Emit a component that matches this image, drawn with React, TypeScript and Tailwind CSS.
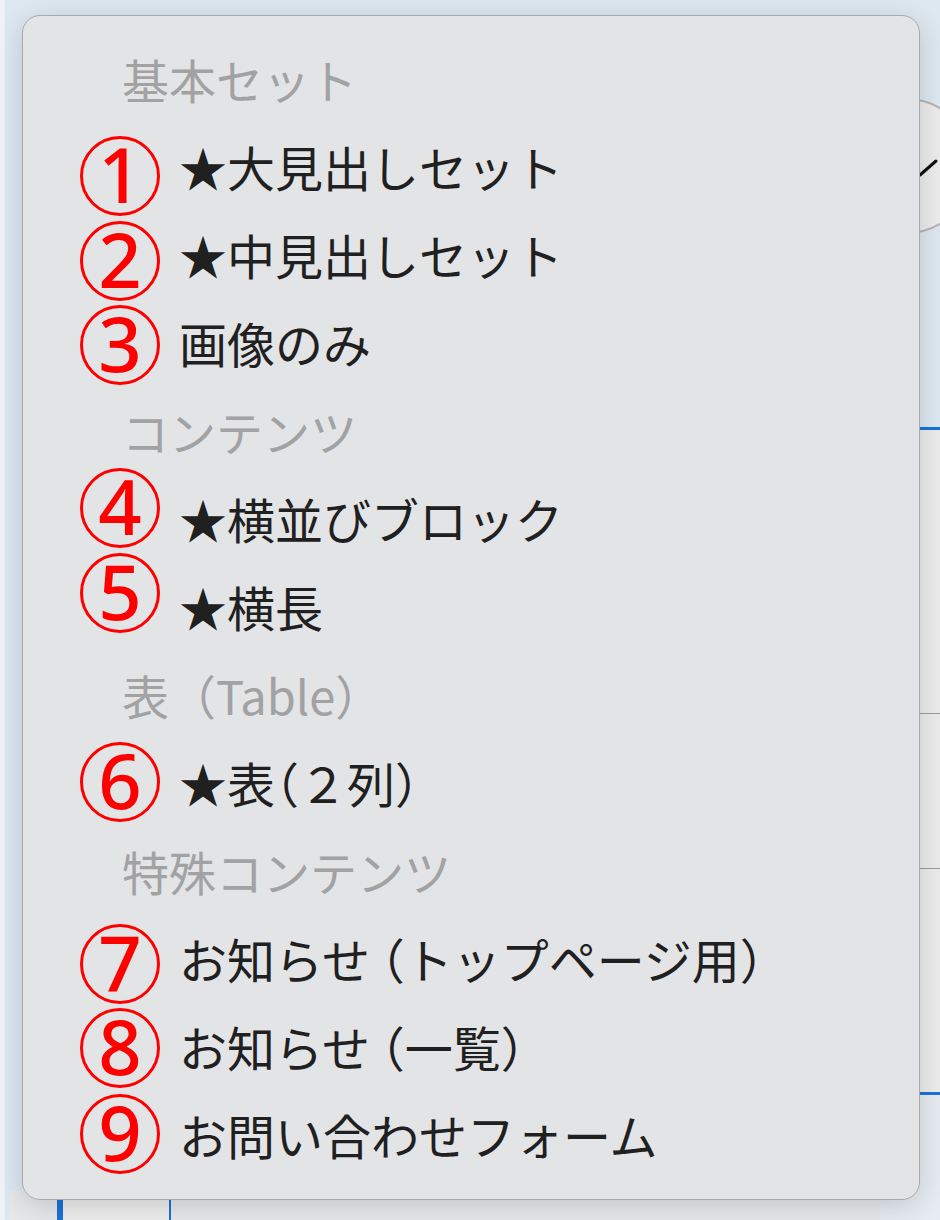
import React from "react";

type Row =
  | { kind: "h"; text: string }
  | { kind: "i"; n: number; text: string; dy: number };

const rows: Row[] = [
  { kind: "h", text: "基本セット" },
  { kind: "i", n: 1, text: "★大見出しセット", dy: 10 },
  { kind: "i", n: 2, text: "★中見出しセット", dy: 7 },
  { kind: "i", n: 3, text: "画像のみ", dy: 3 },
  { kind: "h", text: "コンテンツ" },
  { kind: "i", n: 4, text: "★横並びブロック", dy: -10 },
  { kind: "i", n: 5, text: "★横長", dy: -13 },
  { kind: "h", text: "表（Table）" },
  { kind: "i", n: 6, text: "★表（２列）", dy: 0 },
  { kind: "h", text: "特殊コンテンツ" },
  { kind: "i", n: 7, text: "お知らせ （トップページ用）", dy: 6 },
  { kind: "i", n: 8, text: "お知らせ （一覧）", dy: 2 },
  { kind: "i", n: 9, text: "お問い合わせフォーム", dy: 0 },
];

const font = { fontFamily: '"Noto Sans CJK JP", "Noto Sans", sans-serif' };

function Circled({ n, dy }: { n: number; dy: number }) {
  return (
    <div className="relative w-[80px] h-[80px] shrink-0" style={{ top: dy }}>
      <svg width="80" height="80" viewBox="0 0 80 80">
        <circle cx="40" cy="40" r="38.5" fill="none" stroke="#ff0000" strokeWidth="3" />
        <text
          x="40"
          y="67"
          textAnchor="middle"
          fill="#ff0000"
          fontSize="76"
          fontWeight="500"
          fontFamily='"Noto Sans", "Liberation Sans", sans-serif'
        >
          {n}
        </text>
      </svg>
    </div>
  );
}

export default function App() {
  return (
    <div className="relative w-[940px] h-[1220px] overflow-hidden bg-[#dde8f1] flex" style={font}>
      {/* backdrop: left bright edge */}
      <div className="w-[5px] shrink-0 bg-[#eef3f7]" />

      {/* backdrop: main column */}
      <div className="flex-1 flex flex-col">
        <div className="flex-1" />
        <div className="h-[30px] flex">
          <div className="w-[5px] bg-[#dde8f1]" />
          <div className="w-[47px] bg-[#e6e9ec]" />
          <div className="w-[6px] bg-[#1a73d9]" />
          <div className="w-[106px] bg-[#eeeeee]" />
          <div className="w-[2px] bg-[#1a73d9]" />
          <div className="flex-1 bg-[#e8e9eb]" />
        </div>
      </div>

      {/* backdrop: right strip */}
      <div className="w-[60px] shrink-0 flex flex-col">
        <div className="h-[98px]" />
        <div className="w-[136px] h-[136px] -ml-[42px] rounded-full border-2 border-[#b4b4b4] bg-[#ececec] flex items-start pt-[56px] pl-[76px]">
          <svg width="24" height="24" viewBox="0 0 24 24">
            <line x1="4" y1="19" x2="20" y2="5" stroke="#111" strokeWidth="3" strokeLinecap="round" />
          </svg>
        </div>
        <div className="h-[193px]" />
        <div className="h-[3px] bg-[#1a73d9]" />
        <div className="h-[662px] bg-[#ececec] flex flex-col">
          <div className="h-[284px] border-b border-[#9c9c9c]" />
          <div className="h-[155px] border-b border-[#9c9c9c]" />
        </div>
        <div className="h-[3px] bg-[#1a73d9]" />
        <div className="flex-1 bg-[#e6ecf1]" />
      </div>

      {/* menu panel (overlay) */}
      <div className="absolute left-[22px] top-[15px] w-[898px] h-[1185px] rounded-[18px] border border-[#a7abb0] bg-[#e3e4e6] shadow-[0_6px_28px_rgba(0,0,0,0.16)] pt-[18px] flex flex-col">
        {rows.map((r, i) =>
          r.kind === "h" ? (
            <div key={i} className="h-[88px] flex items-center pl-[99px] text-[47px] leading-none text-[#a2a2a3] whitespace-nowrap">
              {r.text}
            </div>
          ) : (
            <div key={i} className="h-[88px] flex items-center pl-[57px] whitespace-nowrap">
              <Circled n={r.n} dy={r.dy} />
              <span className="ml-[19px] text-[48px] leading-none text-[#202020] [font-feature-settings:'halt']">
                {r.text}
              </span>
            </div>
          )
        )}
      </div>
    </div>
  );
}
